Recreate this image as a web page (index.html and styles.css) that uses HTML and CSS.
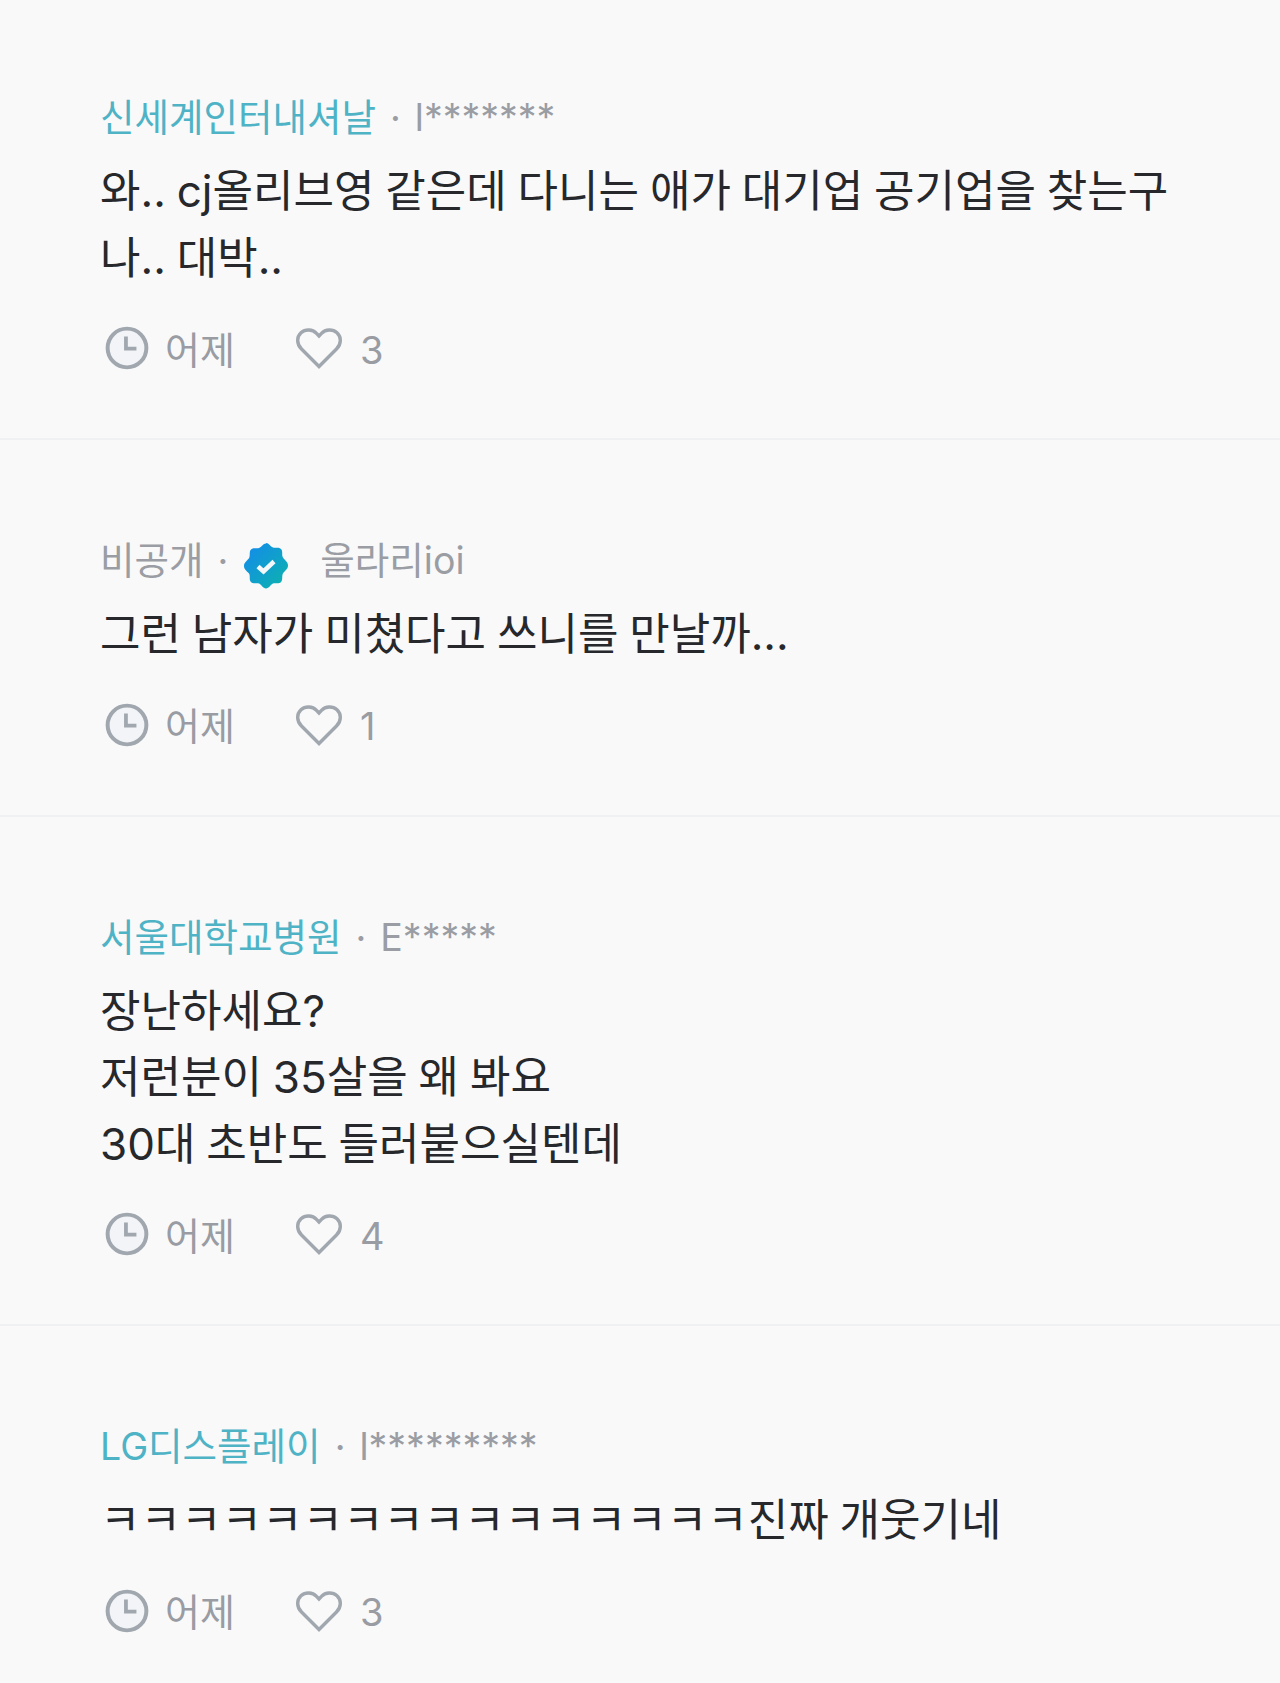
FILE: index.html
```html
<!DOCTYPE html>
<html lang="ko">
<head>
  <meta charset="UTF-8">
  <title>댓글</title>
  <link rel="stylesheet" href="styles.css">
</head>
<body>

<svg class="defs" width="0" height="0">
  <defs>
    <linearGradient id="badgeFill" x1="0" y1="0" x2="1" y2="1">
      <stop offset="0" stop-color="#1489ee"/>
      <stop offset="1" stop-color="#0cb5ab"/>
    </linearGradient>
    <symbol id="clock" viewBox="0 0 42 42">
      <circle cx="21" cy="21" r="18.500" fill="#f2f4f7" stroke="#a1a7ae" stroke-width="3.800"/>
      <path d="M20 10v11.500h10" fill="none" stroke="#a1a7ae" stroke-width="3.600"/>
    </symbol>
    <symbol id="heart" viewBox="0 0 48 42">
      <path d="M24 39.500 6.500 22C1.500 17 1.500 10 6 5.800c4.500-4 11.500-3.600 15.500.6L24 9l2.500-2.600c4-4.200 11-4.600 15.500-.6 4.500 4.200 4.500 11.200-.5 16.200z" fill="none" stroke="#a1a7ae" stroke-width="3.400"/>
    </symbol>
  </defs>
</svg>

<div class="comments">

  <div class="comment">
    <div class="meta"><span class="company">신세계인터내셔날</span><span class="dot">·</span><span>l*******</span></div>
    <p class="text">와.. cj올리브영 같은데 다니는 애가 대기업 공기업을 찾는구나.. 대박..</p>
    <div class="info">
      <svg class="icon-clock"><use href="#clock"/></svg>
      <span class="time">어제</span>
      <svg class="icon-heart"><use href="#heart"/></svg>
      <span class="count">3</span>
    </div>
  </div>

  <div class="comment">
    <div class="meta">
      <span>비공개</span><span class="dot">·</span>
      <svg class="badge" viewBox="0 0 48 48">
        <path d="M24 1c3 0 4.500 3.500 7 4.500 2.500.8 6-.8 8 1.500 2 2 .7 5.500 1.700 8 1 2.500 5.300 4.500 5.300 8.500s-4.300 6-5.300 8.500c-1 2.500.3 6-1.700 8-2 2.300-5.500.7-8 1.500-2.500 1-4 5-7 5s-4.500-4-7-5c-2.500-.8-6 .8-8-1.500-2-2-.7-5.500-1.700-8C6.300 30 2 28 2 24s4.300-6 5.300-8.500c1-2.500-.3-6 1.700-8 2-2.300 5.500-.7 8-1.500 2.500-1 4-4.500 7-4.500z" fill="url(#badgeFill)"/>
        <path d="M16 24.500l5.500 5 10.500-10" fill="none" stroke="#f4f8fb" stroke-width="4.500"/>
      </svg>
      <span>울라리ioi</span>
    </div>
    <p class="text">그런 남자가 미쳤다고 쓰니를 만날까...</p>
    <div class="info">
      <svg class="icon-clock"><use href="#clock"/></svg>
      <span class="time">어제</span>
      <svg class="icon-heart"><use href="#heart"/></svg>
      <span class="count">1</span>
    </div>
  </div>

  <div class="comment">
    <div class="meta"><span class="company">서울대학교병원</span><span class="dot">·</span><span>E*****</span></div>
    <p class="text">장난하세요?<br>저런분이 35살을 왜 봐요<br>30대 초반도 들러붙으실텐데</p>
    <div class="info">
      <svg class="icon-clock"><use href="#clock"/></svg>
      <span class="time">어제</span>
      <svg class="icon-heart"><use href="#heart"/></svg>
      <span class="count">4</span>
    </div>
  </div>

  <div class="comment">
    <div class="meta"><span class="company">LG디스플레이</span><span class="dot">·</span><span>l*********</span></div>
    <p class="text">ㅋㅋㅋㅋㅋㅋㅋㅋㅋㅋㅋㅋㅋㅋㅋㅋ진짜 개웃기네</p>
    <div class="info">
      <svg class="icon-clock"><use href="#clock"/></svg>
      <span class="time">어제</span>
      <svg class="icon-heart"><use href="#heart"/></svg>
      <span class="count">3</span>
    </div>
  </div>

</div>

</body>
</html>
```

FILE: styles.css
```css
body {
  margin: 0;
  background: #f9f9fa;
  font-family: Inter, "Noto Sans CJK KR", sans-serif;
}
.defs {
  position: absolute;
}
.comment {
  padding: 90px 96px 65px 100px;
  border-bottom: 2px solid #f0f1f3;
}
.comment:first-child {
  padding-top: 87px;
}
.comment:last-child {
  border-bottom: none;
}
.meta {
  display: flex;
  align-items: center;
  height: 62px;
  font-size: 37.5px;
  line-height: 62px;
  color: #9a9da3;
}
.company {
  color: #4fb3c6;
}
.dot {
  margin: 0 14px;
}
.badge {
  width: 48px;
  height: 48px;
  margin: 10px 30px 0 0;
}
.text {
  margin: 9px 0 0;
  font-size: 44px;
  line-height: 66.5px;
  word-spacing: -1.5px;
  color: #26282b;
}
.info {
  display: flex;
  align-items: center;
  height: 50px;
  margin-top: 32px;
  padding-left: 5px;
  font-size: 38px;
  color: #999ca2;
}
.icon-clock {
  width: 44px;
  height: 44px;
}
.time {
  margin-left: 16px;
  margin-top: -2px;
}
.icon-heart {
  width: 48px;
  height: 44px;
  margin: 0 17px 0 60px;
}
.count {
  margin-top: 3px;
}
```
